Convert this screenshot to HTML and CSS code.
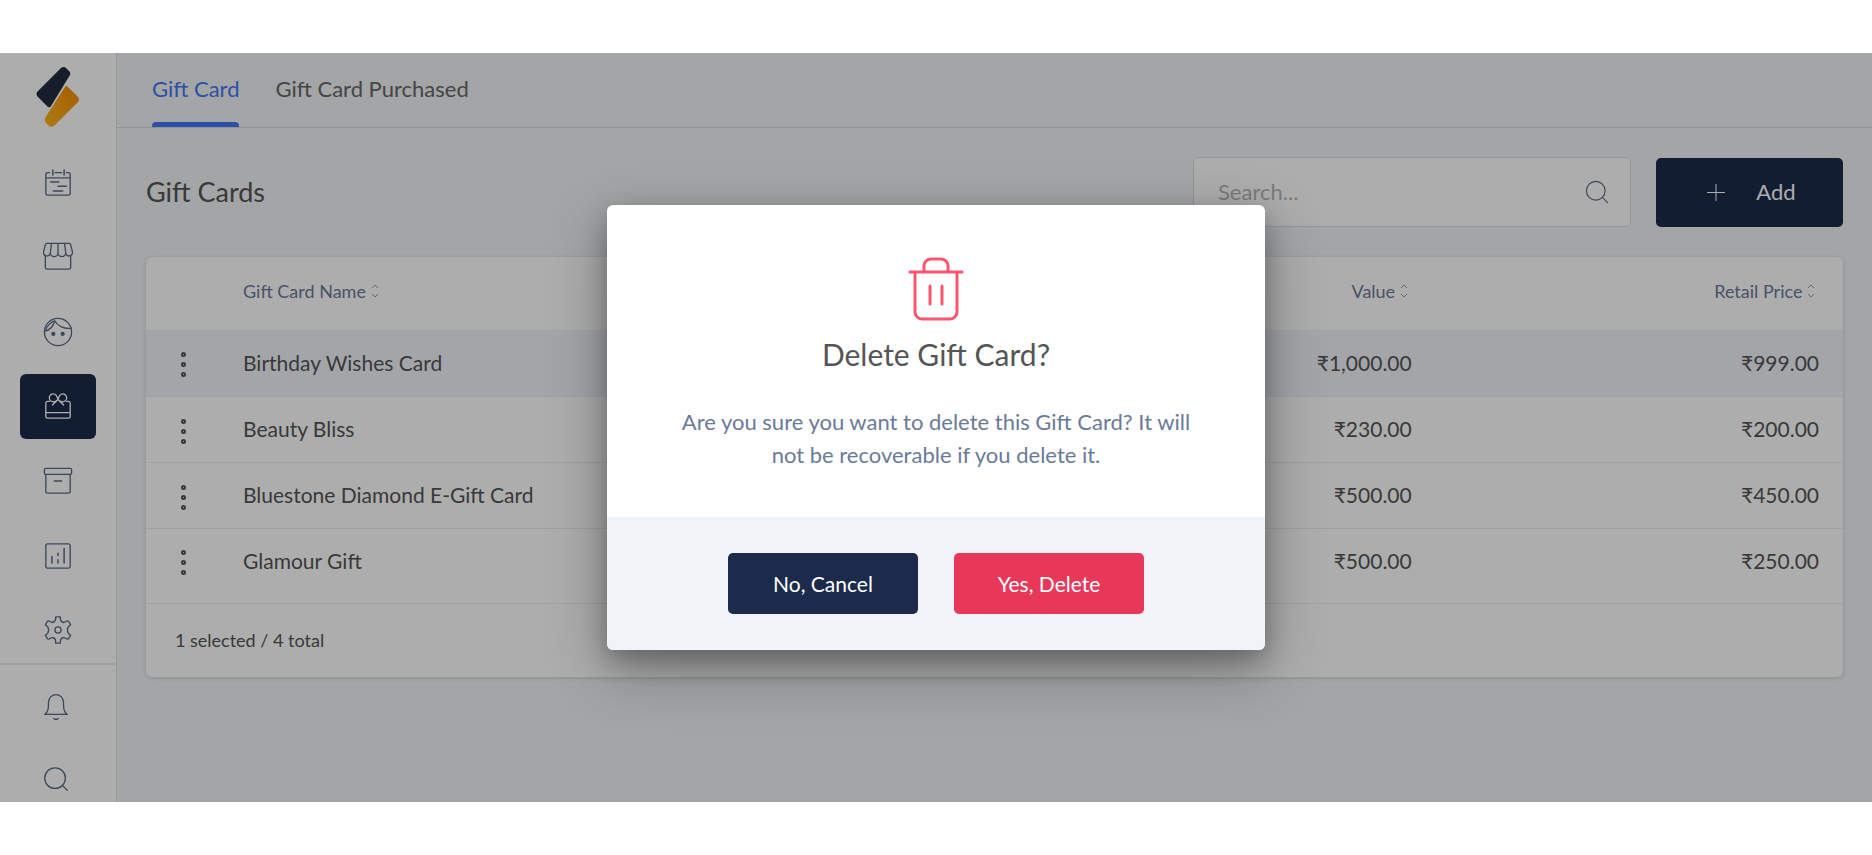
FILE: index.html
```html
<!DOCTYPE html>
<html lang="en">

	<head>
		<meta charset="utf-8" />
		<title>Gift Cards</title>
		<link rel="stylesheet" href="styles.css">
	</head>

	<body>
		<div class="app">
			<aside class="sidebar">
				<a class="logo" href="#" aria-label="Home">
					<svg width="44" height="62" viewBox="0 0 44 62">
						<defs>
							<linearGradient id="gold" x1="1" y1="0" x2="0" y2="1">
								<stop offset="0" stop-color="#f58a00" />
								<stop offset="1" stop-color="#ffb81c" />
							</linearGradient>
						</defs>
						<path fill="#232c40" d="M25 2q3-2 5 0l3 3q2 2 1 4L15 40q-1 2-3 1L2 31q-3-3 0-6z" />
						<path fill="url(#gold)" d="M29 21q1-2 3 0l10 10q2 3 0 5L19 59q-3 3-6 1l-3-3q-2-2-1-5z" />
					</svg>
				</a>
				<nav class="menu">
					<a class="item" href="#" aria-label="Calendar">
						<svg class="icon" viewBox="0 0 32 32">
							<path d="M7 5H5a2 2 0 0 0-2 2v20a2 2 0 0 0 2 2h22a2 2 0 0 0 2-2V7a2 2 0 0 0-2-2h-2M13 5h7M3 10.500h26" />
							<path d="M10.500 2v5.500M22.500 2v5.500M8 15h9M16 19.500h9M11 24.500h10" stroke-width="1.600" />
						</svg>
					</a>
					<a class="item" href="#" aria-label="Sales">
						<svg class="icon" viewBox="0 0 32 32">
							<path d="M2.500 14.500V27a2 2 0 0 0 2 2h23a2 2 0 0 0 2-2V14.500" />
							<path d="M4 1.500h24a2 2 0 0 1 1.500 1.200L31.500 11a3.500 3.500 0 0 1-7.300.5a4.100 4.100 0 0 1-8.200 0a4.100 4.100 0 0 1-8.200 0A3.500 3.500 0 0 1 .5 11L2.500 2.700A2 2 0 0 1 4 1.500zM9 1.500l-1.200 10M16 1.500v10M23 1.500l1.200 10" />
						</svg>
					</a>
					<a class="item" href="#" aria-label="Clients">
						<svg class="icon" viewBox="0 0 32 32">
							<circle cx="16" cy="16" r="14.500" />
							<path d="M2 15c6-1 9-5 10.500-11C15 9 22 13 30 12M12.500 4C8 6 5 9 3 13" />
							<circle class="dot" cx="11" cy="18" r="1.500" />
							<circle class="dot" cx="21" cy="18" r="1.500" />
						</svg>
					</a>
					<a class="item active" href="#" aria-label="Gift cards">
						<svg class="icon" viewBox="0 0 32 32">
							<path d="M7 11H5a2 2 0 0 0-2 2v14a2 2 0 0 0 2 2h22a2 2 0 0 0 2-2V13a2 2 0 0 0-2-2h-2M3 23h26" />
							<path d="M16 9c-1-4-3-6-5-6a4 4 0 0 0 0 8.500c2 0 4-1 5-2.500c1 1.500 3 2.500 5 2.500A4 4 0 0 0 21 3c-2 0-4 2-5 6zM16 9l-6 6M16 9l6 6" />
						</svg>
					</a>
					<a class="item" href="#" aria-label="Inventory">
						<svg class="icon" viewBox="0 0 32 32">
							<rect x="1.500" y="2.500" width="29" height="6.500" rx="1.500" />
							<path d="M3 9v18a2 2 0 0 0 2 2h22a2 2 0 0 0 2-2V9M12 16h8" />
						</svg>
					</a>
					<a class="item" href="#" aria-label="Reports">
						<svg class="icon" viewBox="0 0 32 32">
							<rect x="3" y="3" width="26" height="26" rx="2" />
							<path d="M9.500 16.500v7M16 13v2.500M16 20v3.500M22.500 8v15.500" stroke-width="1.600" />
						</svg>
					</a>
					<a class="item" href="#" aria-label="Settings">
						<svg class="icon" viewBox="0 0 32 32">
							<path d="M13.500 2h5v2.500q.5 3 3.500 3.500l3.500-1.500q1.500-.5 2 .5l2 3.500-2.500 2q-2 3.500 0 7l2.500 2-2 3.500q-.5 1-2 .5L22 24q-3 .5-3.500 3.500V30h-5v-2.500Q13 24.500 10 24l-3.500 1.500q-1.500.5-2-.5l-2-3.500 2.500-2q2-3.500 0-7l-2.500-2 2-3.500q.5-1 2-.5L10 8q3-.5 3.500-3.500z" />
							<circle cx="16" cy="16" r="3.300" />
						</svg>
					</a>
				</nav>
				<div class="tools">
					<button class="tool" aria-label="Notifications">
						<svg class="icon" viewBox="0 0 32 32">
							<path d="M4 26c4-3 4-7 4-13a8 8 0 0 1 16 0c0 6 0 10 4 13zM13.500 30.500q2.500 2 5 0" />
						</svg>
					</button>
					<button class="tool" aria-label="Search">
						<svg class="icon" viewBox="0 0 32 32">
							<circle cx="15" cy="14" r="11" />
							<path d="M23 22l5 5" />
						</svg>
					</button>
				</div>
			</aside>

			<main class="main">
				<nav class="tabs">
					<a class="tab on" href="#">Gift Card</a>
					<a class="tab" href="#">Gift Card Purchased</a>
				</nav>

				<div class="content">
					<div class="toolbar">
						<h1 class="title">Gift Cards</h1>
						<label class="search">
							<input type="text" placeholder="Search..." aria-label="Search gift cards">
							<svg class="icon" viewBox="0 0 32 32">
								<circle cx="14.500" cy="14.500" r="11.500" />
								<path d="M23 23l6 6" />
							</svg>
						</label>
						<button class="add">
							<svg width="18" height="18" viewBox="0 0 18 18"><path d="M9 1v17M0 9.500h18" /></svg>
							<span>Add</span>
						</button>
					</div>

					<div class="card">
						<table class="list">
							<thead>
								<tr>
									<th class="more"></th>
									<th>Gift Card Name <svg class="sort" viewBox="0 0 8 14"><path d="M1 4l3-3 3 3M1 10l3 3 3-3" /></svg></th>
									<th class="money">Value <svg class="sort" viewBox="0 0 8 14"><path d="M1 4l3-3 3 3M1 10l3 3 3-3" /></svg></th>
									<th class="money">Retail Price <svg class="sort" viewBox="0 0 8 14"><path d="M1 4l3-3 3 3M1 10l3 3 3-3" /></svg></th>
								</tr>
							</thead>
							<tbody>
								<tr class="selected">
									<td class="more"><button class="dots" aria-label="Actions"><i></i><i></i><i></i></button></td>
									<td>Birthday Wishes Card</td>
									<td class="money">₹1,000.00</td>
									<td class="money">₹999.00</td>
								</tr>
								<tr>
									<td class="more"><button class="dots" aria-label="Actions"><i></i><i></i><i></i></button></td>
									<td>Beauty Bliss</td>
									<td class="money">₹230.00</td>
									<td class="money">₹200.00</td>
								</tr>
								<tr>
									<td class="more"><button class="dots" aria-label="Actions"><i></i><i></i><i></i></button></td>
									<td>Bluestone Diamond E-Gift Card</td>
									<td class="money">₹500.00</td>
									<td class="money">₹450.00</td>
								</tr>
								<tr>
									<td class="more"><button class="dots" aria-label="Actions"><i></i><i></i><i></i></button></td>
									<td>Glamour Gift</td>
									<td class="money">₹500.00</td>
									<td class="money">₹250.00</td>
								</tr>
							</tbody>
						</table>
						<div class="total">1 selected / 4 total</div>
					</div>
				</div>
			</main>

			<!-- delete confirmation -->
			<div class="overlay">
				<div class="dialog" role="dialog" aria-labelledby="dialog-title">
					<div class="dialog-body">
						<svg class="trash" width="56" height="64" viewBox="0 0 56 64">
							<path d="M2 15h52M7 15v40a7 7 0 0 0 7 7h28a7 7 0 0 0 7-7V15M16 15V9a7 7 0 0 1 7-7h10a7 7 0 0 1 7 7v6M22 29v18M34 29v18" />
						</svg>
						<h2 class="dialog-title" id="dialog-title">Delete Gift Card?</h2>
						<p class="dialog-text">Are you sure you want to delete this Gift Card? It will not be recoverable if you delete it.</p>
					</div>
					<div class="dialog-foot">
						<button class="btn cancel">No, Cancel</button>
						<button class="btn delete">Yes, Delete</button>
					</div>
				</div>
			</div>
		</div>
	</body>

</html>
```
FILE: styles.css
```css
* {
	padding: 0;
	margin: 0;
	box-sizing: border-box;
}

body {
	padding: 53px 0;
	background: #fff;
	color: #555;
	font-family: Lato, "Noto Sans", sans-serif;
	font-size: 22px;
	line-height: 32px;
}

a {
	color: inherit;
	text-decoration: none;
}

button,
input {
	border: 0;
	background: none;
	font: inherit;
	color: inherit;
}

.app {
	position: relative;
	display: flex;
	height: calc(100vh - 106px);
	min-height: 640px;
	overflow: hidden;
	background: #f0f3f6;
}

.icon {
	width: 30px;
	height: 30px;
	fill: none;
	stroke: #5b6985;
	stroke-width: 1.4;
	stroke-linecap: round;
	stroke-linejoin: round;
}

.dot {
	fill: #5b6985;
}

/* sidebar */
.sidebar {
	display: flex;
	flex-direction: column;
	width: 117px;
	background: #fff;
	border-right: 1px solid #dde1e5;
}

.logo {
	display: flex;
	justify-content: center;
	height: 97px;
	padding-top: 13px;
}

.menu {
	flex: 1;
	display: flex;
	flex-direction: column;
	align-items: center;
	justify-content: space-between;
}

.item {
	display: flex;
	align-items: center;
	justify-content: center;
	width: 76px;
	height: 65px;
	border-radius: 6px;
}

.active {
	background: #1c2b4b;
}

.active .icon {
	stroke: #fff;
}

.tools {
	display: flex;
	flex-direction: column;
	align-items: center;
	height: 139px;
	padding-top: 2px;
	padding-right: 4px;
	border-top: 2px solid #eceef1;
}

.tool {
	display: flex;
	flex-shrink: 0;
	align-items: center;
	justify-content: center;
	width: 76px;
	height: 75px;
}

/* tabs */
.main {
	flex: 1;
	min-width: 0;
}

.tabs {
	display: flex;
	gap: 36px;
	height: 75px;
	padding: 0 35px;
	border-bottom: 1px solid #d4d9de;
	color: #666;
}

.tab {
	padding-top: 20px;
}

.on {
	position: relative;
	color: #4077f5;
}

.on::after {
	content: "";
	position: absolute;
	left: 0;
	right: 0;
	bottom: 0;
	height: 5px;
	border-radius: 4px 4px 0 0;
	background: #4077f5;
}

/* page */
.content {
	padding: 29px;
}

.toolbar {
	display: flex;
	align-items: center;
	gap: 25px;
	margin-bottom: 30px;
}

.title {
	flex: 1;
	font-size: 27px;
	font-weight: 400;
}

.search {
	display: flex;
	align-items: center;
	width: 438px;
	height: 70px;
	padding: 0 20px 0 24px;
	border: 1px solid #d8dee3;
	border-radius: 5px;
	background: #fff;
}

.search input {
	flex: 1;
	min-width: 0;
}

.search input::placeholder {
	color: #b5b5b5;
}

.search .icon {
	width: 26px;
	height: 26px;
}

.add {
	display: flex;
	align-items: center;
	justify-content: center;
	gap: 31px;
	width: 187px;
	height: 69px;
	padding-left: 4px;
	border-radius: 5px;
	background: #1c2b4b;
	color: #fff;
}

.add svg {
	stroke: #fff;
}

.card {
	border-radius: 6px;
	background: #fff;
	box-shadow: 0 1px 4px rgba(0, 0, 0, .15);
}

.list {
	width: 100%;
	table-layout: fixed;
	border-collapse: collapse;
}

.list th {
	height: 73px;
	padding: 0 24px 6px;
	color: #6b7a99;
	font-size: 18px;
	font-weight: 400;
	text-align: left;
}

.list td {
	height: 66px;
	padding: 0 24px;
	border-bottom: 1px solid #eceef0;
	font-size: 21px;
}

.list tr:last-child td {
	height: 75px;
	padding-bottom: 10px;
}

.list .more {
	width: 73px;
}

.list .money {
	width: 24%;
	text-align: right;
}

.list th.money {
	padding-right: 28px;
}

.selected {
	background: #f0f3fa;
}

.sort {
	width: 8px;
	height: 14px;
	fill: none;
	stroke: #9a9a9a;
}

.dots {
	display: flex;
	flex-direction: column;
	align-items: center;
	gap: 5px;
	width: 27px;
	padding-top: 4px;
}

.dots i {
	width: 5px;
	height: 5px;
	border: 2px solid #555;
	border-radius: 50%;
}

.total {
	padding: 20px 29px 21px;
	font-size: 18px;
}

/* dialog */
.overlay {
	position: absolute;
	inset: 0;
	display: flex;
	align-items: center;
	justify-content: center;
	background: rgba(0, 0, 0, .32);
}

.dialog {
	width: 658px;
	border-radius: 6px;
	overflow: hidden;
	background: #fff;
	box-shadow: 0 20px 60px rgba(0, 0, 0, .3), 0 10px 24px rgba(0, 0, 0, .25);
	text-align: center;
}

.dialog-body {
	padding: 52px 64px 46px;
}

.trash {
	display: block;
	margin: 0 auto 13px;
	fill: none;
	stroke: #fb5671;
	stroke-width: 3;
	stroke-linecap: round;
}

.dialog-title {
	margin-bottom: 31px;
	font-size: 30px;
	font-weight: 400;
	line-height: 40px;
}

.dialog-text {
	color: #6b7a99;
	line-height: 33px;
}

.dialog-foot {
	display: flex;
	align-items: center;
	justify-content: center;
	gap: 36px;
	height: 133px;
	background: #f0f4f9;
}

.btn {
	width: 190px;
	height: 61px;
	border-radius: 5px;
	color: #fff;
	font-size: 21px;
}

.cancel {
	background: #1c2b4b;
}

.delete {
	background: #e73859;
}
```
